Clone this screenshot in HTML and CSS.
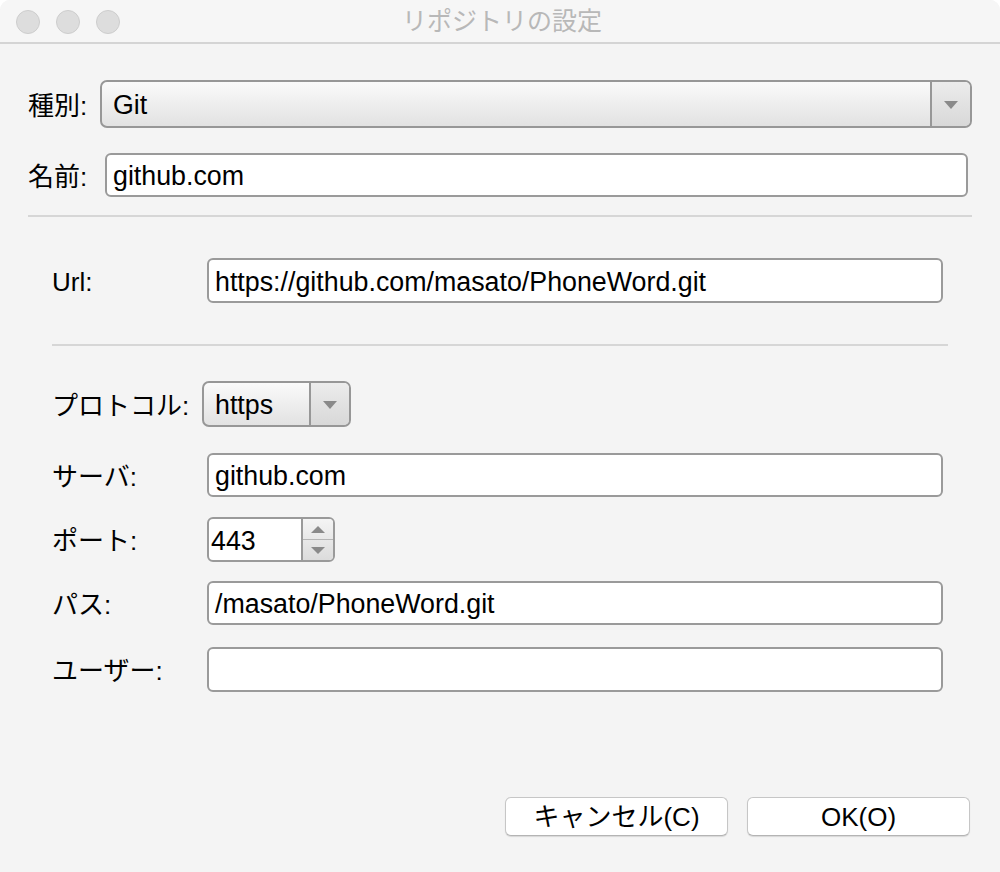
FILE: index.html
```html
<!DOCTYPE html>
<html lang="ja">
<head>
<meta charset="utf-8">
<title>リポジトリの設定</title>
<link rel="stylesheet" href="styles.css">
</head>
<body>
<div class="window">
  <div class="titlebar">
    <div class="lights">
      <span class="light"></span><span class="light"></span><span class="light"></span>
    </div>
    <div class="title">リポジトリの設定</div>
  </div>
  <div class="content">
    <div class="row row-kind">
      <div class="label label-kind">種別:</div>
      <div class="combo combo-wide">
        <div class="combo-text">Git</div>
        <div class="combo-btn"><span class="tri-down"></span></div>
      </div>
    </div>
    <div class="row row-name">
      <div class="label label-name">名前:</div>
      <div class="field field-name">github.com</div>
    </div>
    <div class="sep"></div>
    <div class="group">
      <div class="row row-url">
        <div class="label label-col">Url:</div>
        <div class="field">https://github.com/masato/PhoneWord.git</div>
      </div>
      <div class="sep sep-inner"></div>
      <div class="row row-proto">
        <div class="label label-proto">プロトコル:</div>
        <div class="combo combo-small">
          <div class="combo-text">https</div>
          <div class="combo-btn"><span class="tri-down"></span></div>
        </div>
      </div>
      <div class="row row-server">
        <div class="label label-col">サーバ:</div>
        <div class="field">github.com</div>
      </div>
      <div class="row row-port">
        <div class="label label-col">ポート:</div>
        <div class="spin">
          <div class="spin-text">443</div>
          <div class="spin-btns">
            <div class="spin-up"><span class="tri-up"></span></div>
            <div class="spin-down"><span class="tri-down small"></span></div>
          </div>
        </div>
      </div>
      <div class="row row-path">
        <div class="label label-col">パス:</div>
        <div class="field">/masato/PhoneWord.git</div>
      </div>
      <div class="row row-user">
        <div class="label label-col">ユーザー:</div>
        <div class="field"></div>
      </div>
    </div>
    <div class="buttons">
      <div class="btn">キャンセル(C)</div>
      <div class="btn">OK(O)</div>
    </div>
  </div>
</div>
</body>
</html>
```
FILE: styles.css
```css
* { box-sizing: border-box; }
html, body { margin: 0; padding: 0; background: #ffffff; }
body {
  font-family: "Liberation Sans", "Noto Sans CJK JP", sans-serif;
  font-size: 26px;
  color: #000;
}
.window {
  width: 1000px;
  height: 872px;
  background: #f4f4f4;
  border-top-left-radius: 10px;
  border-top-right-radius: 10px;
  overflow: hidden;
  display: flex;
  flex-direction: column;
}
.titlebar {
  height: 44px;
  flex: none;
  background: #f6f6f6;
  border-bottom: 2px solid #d4d4d4;
  position: relative;
  display: flex;
  align-items: center;
  justify-content: center;
}
.lights {
  position: absolute;
  left: 16px;
  top: 10px;
  display: flex;
  gap: 16px;
}
.light {
  width: 24px;
  height: 24px;
  border-radius: 50%;
  background: #dddddd;
  border: 1px solid #cdcdcd;
  display: block;
}
.title {
  color: #b8b8b8;
  font-size: 25px;
  padding-left: 4px;
  line-height: 1;
}
.content {
  flex: 1;
  display: flex;
  flex-direction: column;
  padding: 0 28px 0 28px;
}
.row { display: flex; align-items: center; }
.label { flex: none; white-space: nowrap; line-height: 1; padding-top: 3px; }
.label-kind { width: 72px; }
.label-name { width: 77px; }
.row-kind { margin-top: 36px; height: 48px; }
.row-name { margin-top: 25px; height: 44px; }
.field {
  flex: 1;
  height: 100%;
  background: #ffffff;
  border: 2px solid #9a9a9a;
  border-radius: 6px;
  padding: 3px 6px 0 6px;
  display: flex;
  align-items: center;
  line-height: 1;
  white-space: nowrap;
  font-size: 26.8px;
}
.field-name { margin-right: 4px; }
.sep {
  height: 2px;
  background: #d6d6d6;
  margin-top: 18px;
}
.group {
  display: flex;
  flex-direction: column;
  padding: 0 24px 0 24px;
}
.group .row { margin-right: 5px; }
.label-col { width: 155px; }
.label-proto { width: 150px; }
.row-url { margin-top: 41px; height: 45px; }
.sep-inner { margin-top: 41px; margin-right: 0; }
.row-proto { margin-top: 35px; height: 46px; }
.row-server { margin-top: 26px; height: 44px; }
.row-port { margin-top: 20px; height: 45px; }
.row-path { margin-top: 19px; height: 44px; }
.row-user { margin-top: 22px; height: 45px; }
.combo {
  height: 100%;
  display: flex;
  border: 2px solid #979797;
  border-radius: 7px;
  background: linear-gradient(#fafafa, #e2e2e2);
  overflow: hidden;
}
.combo-wide { flex: 1; }
.combo-small { width: 149px; flex: none; }
.combo-text {
  flex: 1;
  display: flex;
  align-items: center;
  padding: 3px 0 0 11px;
  line-height: 1;
  font-size: 26.8px;
}
.combo-btn {
  width: 40px;
  flex: none;
  border-left: 2px solid #979797;
  background: linear-gradient(#ececec, #d8d8d8);
  display: flex;
  align-items: center;
  justify-content: center;
}
.tri-down {
  width: 0;
  height: 0;
  border-left: 7px solid transparent;
  border-right: 7px solid transparent;
  border-top: 8px solid #8a8a8a;
  display: block;
  margin-top: 1px;
}
.tri-up {
  width: 0;
  height: 0;
  border-left: 7px solid transparent;
  border-right: 7px solid transparent;
  border-bottom: 7px solid #8a8a8a;
  display: block;
}
.tri-down.small { border-top-width: 7px; margin-top: 0; }
.spin {
  width: 128px;
  height: 100%;
  display: flex;
  border: 2px solid #9a9a9a;
  border-radius: 6px;
  overflow: hidden;
  background: #ffffff;
}
.spin-text {
  flex: 1;
  display: flex;
  align-items: center;
  padding: 3px 0 0 2px;
  line-height: 1;
  font-size: 26.8px;
}
.spin-btns {
  width: 32px;
  flex: none;
  border-left: 2px solid #9a9a9a;
  display: flex;
  flex-direction: column;
  background: linear-gradient(#f4f4f4, #dcdcdc);
}
.spin-up, .spin-down {
  flex: 1;
  display: flex;
  align-items: center;
  justify-content: center;
}
.spin-up { border-bottom: 1px solid #b5b5b5; }
.buttons {
  margin-top: auto;
  margin-bottom: 36px;
  display: flex;
  justify-content: flex-end;
  gap: 19px;
  padding-right: 2px;
}
.btn {
  width: 223px;
  height: 39px;
  background: #ffffff;
  border: 1px solid #c6c6c6;
  border-bottom-color: #b4b4b4;
  border-radius: 6px;
  box-shadow: 0 1px 1px rgba(0,0,0,0.12);
  display: flex;
  align-items: center;
  justify-content: center;
  line-height: 1;
  padding-top: 1px;
}
```
